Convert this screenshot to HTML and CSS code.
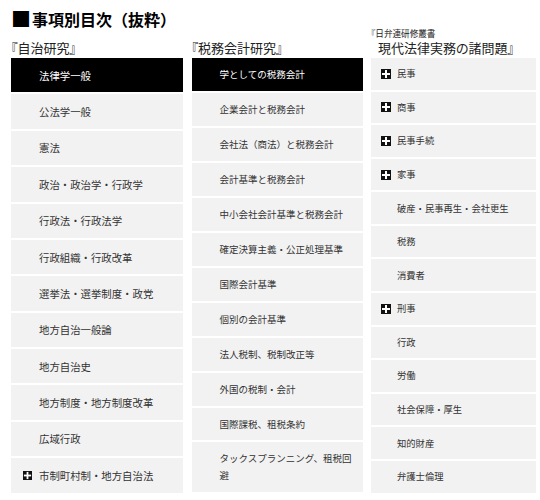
FILE: index.html
```html
<!DOCTYPE html>
<html lang="ja">
<head>
<meta charset="utf-8">
<title>事項別目次（抜粋）</title>
<link rel="stylesheet" href="styles.css">
</head>
<body>
<h1 class="title"><span class="mark">■</span>事項別目次（抜粋）</h1>
<div class="board">
  <div class="head">『自治研究』</div>
  <div class="head">『税務会計研究』</div>
  <div class="head head-two"><span class="sub">『日弁連研修叢書</span><span class="main">現代法律実務の諸問題』</span></div>

  <ul class="list list-1">
    <li class="item active">法律学一般</li>
    <li class="item">公法学一般</li>
    <li class="item">憲法</li>
    <li class="item">政治・政治学・行政学</li>
    <li class="item">行政法・行政法学</li>
    <li class="item">行政組織・行政改革</li>
    <li class="item">選挙法・選挙制度・政党</li>
    <li class="item">地方自治一般論</li>
    <li class="item">地方自治史</li>
    <li class="item">地方制度・地方制度改革</li>
    <li class="item">広域行政</li>
    <li class="item"><svg class="plus" viewBox="0 0 10 10"><rect width="10" height="10" fill="#111"/><rect x="4" y="1" width="2" height="8" fill="#fff"/><rect x="1" y="4" width="8" height="2" fill="#fff"/></svg>市制町村制・地方自治法</li>
  </ul>

  <ul class="list list-2">
    <li class="item active">学としての税務会計</li>
    <li class="item">企業会計と税務会計</li>
    <li class="item">会社法（商法）と税務会計</li>
    <li class="item">会計基準と税務会計</li>
    <li class="item">中小会社会計基準と税務会計</li>
    <li class="item">確定決算主義・公正処理基準</li>
    <li class="item">国際会計基準</li>
    <li class="item">個別の会計基準</li>
    <li class="item">法人税制、税制改正等</li>
    <li class="item">外国の税制・会計</li>
    <li class="item">国際課税、租税条約</li>
    <li class="item">タックスプランニング、租税回避</li>
  </ul>

  <ul class="list list-3">
    <li class="item"><svg class="plus" viewBox="0 0 10 10"><rect width="10" height="10" fill="#111"/><rect x="4" y="1" width="2" height="8" fill="#fff"/><rect x="1" y="4" width="8" height="2" fill="#fff"/></svg>民事</li>
    <li class="item"><svg class="plus" viewBox="0 0 10 10"><rect width="10" height="10" fill="#111"/><rect x="4" y="1" width="2" height="8" fill="#fff"/><rect x="1" y="4" width="8" height="2" fill="#fff"/></svg>商事</li>
    <li class="item"><svg class="plus" viewBox="0 0 10 10"><rect width="10" height="10" fill="#111"/><rect x="4" y="1" width="2" height="8" fill="#fff"/><rect x="1" y="4" width="8" height="2" fill="#fff"/></svg>民事手続</li>
    <li class="item"><svg class="plus" viewBox="0 0 10 10"><rect width="10" height="10" fill="#111"/><rect x="4" y="1" width="2" height="8" fill="#fff"/><rect x="1" y="4" width="8" height="2" fill="#fff"/></svg>家事</li>
    <li class="item">破産・民事再生・会社更生</li>
    <li class="item">税務</li>
    <li class="item">消費者</li>
    <li class="item"><svg class="plus" viewBox="0 0 10 10"><rect width="10" height="10" fill="#111"/><rect x="4" y="1" width="2" height="8" fill="#fff"/><rect x="1" y="4" width="8" height="2" fill="#fff"/></svg>刑事</li>
    <li class="item">行政</li>
    <li class="item">労働</li>
    <li class="item">社会保障・厚生</li>
    <li class="item">知的財産</li>
    <li class="item">弁護士倫理</li>
  </ul>
</div>
</body>
</html>
```

FILE: styles.css
```css
html, body {
  margin: 0;
  padding: 0;
  background: #fff;
}

body {
  padding: 9px 4px 0 11px;
  font-family: "Noto Sans CJK JP", "Noto Sans", sans-serif;
  color: #333;
}

.title {
  margin: 0;
  height: 20px;
  font-size: 16px;
  line-height: 20px;
  font-weight: bold;
  color: #000;
  white-space: nowrap;
}

.mark {
  font-size: 20px;
  line-height: 20px;
  vertical-align: -1px;
  margin-right: 1px;
}

.board {
  display: grid;
  grid-template-columns: 172px 171px 165px;
  column-gap: 8.5px;
}

.head {
  align-self: end;
  margin-bottom: 2px;
  font-size: 13px;
  line-height: 16px;
  color: #222;
  font-feature-settings: "palt";
}

.head-two .sub {
  display: block;
  font-size: 8.6px;
  line-height: 9px;
  margin-bottom: 2px;
}

.head-two .main {
  display: block;
  padding-left: 7px;
}

.list {
  list-style: none;
  margin: 0;
  padding: 0;
  display: flex;
  flex-direction: column;
  gap: 2px;
}

.item {
  flex: 1 1 auto;
  display: flex;
  align-items: center;
  background: #f2f2f2;
  line-height: 17px;
  padding: 0 5px 0 28px;
}

.list-1 .item {
  font-size: 10.4px;
  padding-top: 8.7px;
  padding-bottom: 8.7px;
}

.list-2 .item {
  font-size: 9.5px;
}

.list-3 .item {
  font-size: 9.3px;
  padding-left: 26px;
}

.item.active {
  background: #000;
  color: #fff;
}

.plus {
  flex: none;
  width: 10px;
  height: 10px;
  margin-left: -16px;
  margin-right: 6px;
}

.list-1 .plus {
  width: 9px;
  height: 9px;
  margin-right: 7px;
}
```
